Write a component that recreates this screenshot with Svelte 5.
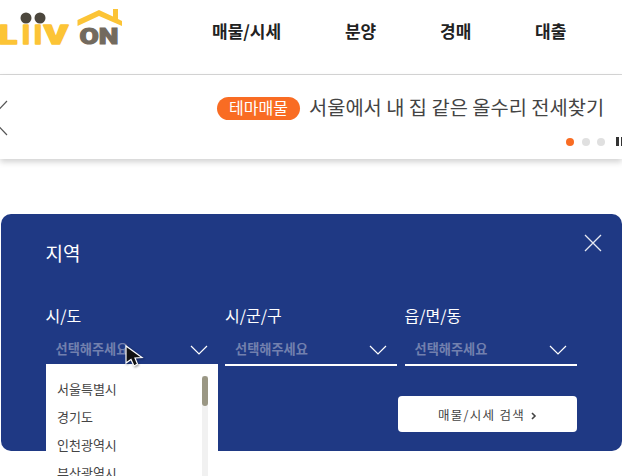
<script>
  const nav = ['매물/시세', '분양', '경매', '대출']
  const fields = ['시/도', '시/군/구', '읍/면/동']
  const cities = ['서울특별시', '경기도', '인천광역시', '부산광역시', '대구광역시']
</script>

<div class="page">
  <header class="top">
    <svg class="logo" width="124" height="50" viewBox="0 0 124 50">
      <circle cx="26" cy="18" r="5.5" fill="#4c473d" />
      <circle cx="40" cy="18" r="5.5" fill="#4c473d" />
      <text class="liiv" x="-1" y="44" textLength="18" lengthAdjust="spacingAndGlyphs">L</text>
      <text class="liiv" x="22 34" y="44">II</text>
      <text class="liiv" x="44" y="44" textLength="24" lengthAdjust="spacingAndGlyphs">V</text>
      <path d="M77.5 20 L99 10 L113 16.5 L113 9 L118 9 L118 19 L122 21 L122 26 L99 16 L77.5 26 Z" fill="#fcc436" />
      <text class="on" x="79.5" y="43.5" textLength="39" lengthAdjust="spacingAndGlyphs">ON</text>
    </svg>
    <nav class="menu">
      {#each nav as item}
        <span>{item}</span>
      {/each}
    </nav>
  </header>

  <section class="banner">
    <svg class="prev" width="8" height="36" viewBox="0 0 8 36">
      <path d="M7 1 L-9 18 L7 35" fill="none" stroke="#555" stroke-width="1.2" />
    </svg>
    <div class="headline">
      <span class="badge">테마매물</span>
      <span class="title">서울에서 내 집 같은 올수리 전세찾기</span>
    </div>
    <div class="dots">
      <i class="on"></i><i></i><i></i>
      <b></b><b></b>
    </div>
  </section>

  <section class="panel">
    <h2>지역</h2>
    <svg class="close" width="18" height="18" viewBox="0 0 18 18">
      <path d="M1 1 L17 17 M17 1 L1 17" stroke="#e6e9f2" stroke-width="1.3" fill="none" />
    </svg>

    <div class="fields">
      {#each fields as label}
        <div class="field">
          <div class="label">{label}</div>
          <div class="select">
            <span>선택해주세요</span>
            <svg width="18" height="10" viewBox="0 0 18 10">
              <path d="M1 1 L9 9 L17 1" fill="none" stroke="#fff" stroke-width="1.2" />
            </svg>
          </div>
        </div>
      {/each}
    </div>

    <div class="actions">
      <button>매물/시세 검색
        <svg width="6" height="8" viewBox="0 0 6 8">
          <path d="M1 1 L4 4 L1 7" fill="none" stroke="#444" stroke-width="1.6" />
        </svg>
      </button>
    </div>
  </section>

  <ul class="dropdown">
    {#each cities as city}
      <li>{city}</li>
    {/each}
    <div class="scroll"><div class="thumb"></div></div>
  </ul>

  <svg class="cursor" width="22" height="26" viewBox="0 0 22 26">
    <path d="M3 2 L3 19 L8 15.5 L11 22 L14.5 20 L12 14 L19 13.5 Z" fill="#111" stroke="#fff" stroke-width="1.2" />
  </svg>
</div>

<style>
  :global(body) {
    background: #fff;
    font-family: 'Noto Sans CJK KR', 'Noto Sans', sans-serif;
  }

  .page {
    position: relative;
    width: 622px;
    height: 476px;
    overflow: hidden;
  }

  .top {
    display: flex;
    align-items: center;
    height: 74px;
    border-bottom: 1px solid #d8d8d8;
  }

  .logo {
    flex: none;
    align-self: flex-start;
  }

  .liiv {
    font: 900 26px Roboto, sans-serif;
    fill: #fcc436;
    stroke: #fcc436;
    stroke-width: 1.6px;
    stroke-linejoin: round;
  }

  .on {
    font: 900 22px Roboto, sans-serif;
    fill: #736a5e;
    stroke: #736a5e;
    stroke-width: 1px;
  }

  .menu {
    display: flex;
    margin-left: 88px;
    margin-top: -14px;
    gap: 63.8px;
    font-size: 17px;
    font-weight: 700;
    color: #222;
  }

  .banner {
    position: relative;
    height: 84px;
    box-shadow: 0 3px 6px rgba(0, 0, 0, 0.18);
  }

  .prev {
    position: absolute;
    left: 0;
    top: 25px;
  }

  .headline {
    display: flex;
    align-items: center;
    padding: 22px 0 0 217px;
  }

  .badge {
    width: 83px;
    height: 23px;
    line-height: 21px;
    border-radius: 12px;
    background: #f96c23;
    color: #fff;
    text-align: center;
    font-size: 16px;
  }

  .title {
    margin: -3px 0 0 9px;
    font-size: 19.8px;
    line-height: 26px;
    color: #444;
    white-space: nowrap;
  }

  .dots {
    display: flex;
    align-items: center;
    gap: 7.5px;
    padding: 17px 0 0 566px;
  }

  .dots i {
    flex: none;
    width: 8px;
    height: 8px;
    border-radius: 50%;
    background: #e0e0e0;
  }

  .dots i.on {
    background: #f96c23;
  }

  .dots b {
    flex: none;
    width: 3px;
    height: 9px;
    background: #333;
    margin-left: -6px;
  }

  .dots b:first-of-type {
    margin-left: 3.5px;
  }

  .panel {
    position: relative;
    margin: 55px 0 0 1px;
    height: 237px;
    padding: 25px 45px 0 44.5px;
    box-sizing: border-box;
    background: #1f3984;
    border-radius: 10px;
    color: #fff;
  }

  h2 {
    margin: 0;
    font-size: 19px;
    font-weight: 400;
    line-height: 28px;
  }

  .close {
    position: absolute;
    top: 20px;
    right: 20px;
  }

  .fields {
    display: flex;
    gap: 7.5px;
    margin-top: 37px;
  }

  .field {
    width: 172px;
  }

  .label {
    font-size: 16px;
    line-height: 22px;
  }

  .select {
    display: flex;
    align-items: center;
    justify-content: space-between;
    height: 32px;
    padding: 6px 10px 0;
    border-bottom: 2px solid #fff;
    font-size: 13.2px;
    font-weight: 700;
    color: #7280ae;
  }

  .select svg {
    margin-top: 4px;
  }

  .actions {
    display: flex;
    justify-content: flex-end;
    margin-top: 30px;
  }

  button {
    width: 179px;
    height: 36px;
    border: 0;
    border-radius: 4px;
    background: #fff;
    color: #444;
    font: 12.5px 'Noto Sans CJK KR', sans-serif;
    letter-spacing: 1.3px;
  }

  button svg {
    margin-left: 2px;
  }

  .dropdown {
    position: absolute;
    left: 46px;
    top: 364px;
    width: 172px;
    height: 140px;
    margin: 0;
    padding: 11px 0 0 11px;
    box-sizing: border-box;
    list-style: none;
    background: #fff;
    font-size: 13px;
    color: #444;
  }

  .dropdown li {
    height: 28px;
    line-height: 28px;
  }

  .scroll {
    position: absolute;
    right: 10px;
    top: 12px;
    bottom: 0;
    width: 6px;
    background: #f1f1f1;
  }

  .thumb {
    height: 30px;
    border-radius: 3px;
    background: #9a9784;
  }

  .cursor {
    position: absolute;
    left: 123px;
    top: 344px;
    filter: drop-shadow(1px 1px 1px rgba(0, 0, 0, 0.4));
  }
</style>
